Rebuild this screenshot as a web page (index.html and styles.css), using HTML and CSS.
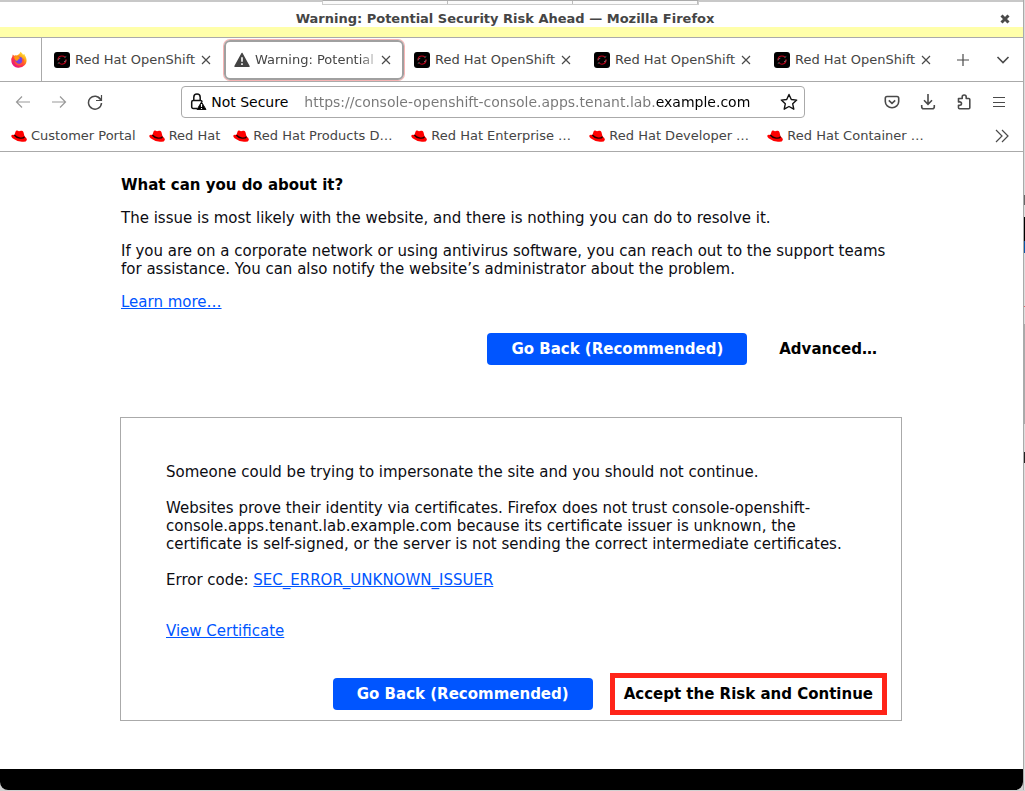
FILE: index.html
```html
<!DOCTYPE html>
<html lang="en">
<head>
<meta charset="utf-8">
<title>Warning: Potential Security Risk Ahead — Mozilla Firefox</title>
<link rel="stylesheet" href="styles.css">
</head>
<body>
<svg class="sprite" aria-hidden="true">
  <symbol id="hat" viewBox="0 0 16 14">
    <path fill="#f00" d="M3.400 6 4.600 2.600Q5 1.400 6.200 1.600L8 2.200 10 1.800Q11.800 1.600 12.400 3L13.600 7.400Q16.200 9 15.800 11 15 13.400 11 12.700 5 12 1.600 9.200-.2 7.400.4 6.400 1 5.400 3.400 6z"/>
    <path fill="none" stroke="#200" stroke-width="1.300" d="M3.300 6Q5 8.400 9 9.100 12.600 9.500 13.600 7.600"/>
  </symbol>
  <symbol id="openshift" viewBox="0 0 16 16">
    <rect width="16" height="16" rx="3"/>
    <path fill="none" stroke="#c0001a" stroke-width="1.100" d="M4 8.500Q3.800 4 8 4q1.800 0 2.800 1M12 7.300q.2 4.600-4 4.900-1.800 0-2.800-1.200"/>
    <path fill="none" stroke="#888" stroke-width=".8" d="m3.800 7.500 2.500-1.300M10 9.800l2.300-1.200M10.500 5.600l1.700-1M3.800 11.400l1.700-1"/>
  </symbol>
  <symbol id="close" viewBox="0 0 10 10"><path d="m1 1 8 8M9 1 1 9"/></symbol>
</svg>
<div class="desktop">
<div class="window">
  <header class="titlebar">
    <span class="title">Warning: Potential Security Risk Ahead — Mozilla Firefox</span>
    <button class="window-close" aria-label="Close window"><svg class="line heavy" width="10" height="10" viewBox="0 0 10 10"><path d="m1.500 1.500 7 7M8.500 1.500l-7 7"/></svg></button>
    <span class="shelf"><i></i><i></i><i></i></span>
  </header>
  <div class="highlight"></div>

  <nav class="tabs" aria-label="Tabs">
    <button class="view" aria-label="Firefox View">
      <svg width="18" height="18" viewBox="0 0 18 18">
        <defs><linearGradient id="flame" x1=".85" y1=".05" x2=".2" y2=".95"><stop offset="0" stop-color="#fff44f"/><stop offset=".35" stop-color="#ff980e"/><stop offset=".65" stop-color="#ff3647"/><stop offset="1" stop-color="#e31587"/></linearGradient></defs>
        <path fill="url(#flame)" d="M10.500.8q2 1.400 2.500 3l1.400-.9q.3 1.700 1.300 2.800 2.200 5-.8 8.300-2.800 3-6.900 2.700Q2.600 16 1.500 11.200.8 7 2.400 5.200l.3-1.700 1.500 1.200q1.500-.6 2.800-.1 2.800-1.200 3.500-3.800z"/>
        <circle cx="9" cy="9.600" r="3.900" fill="#7542e5"/>
        <path fill="#ff980e" d="M4 5.400q2.200-1 4.400.4l1.800 1.300-2 1.300-1.100 1.600Q4.600 9.500 4 5.400z"/>
        <path fill="none" stroke="#ff5634" stroke-width="1.600" d="M5 10.500q1.600 4 5.300 2.900 3.500-1.400 2.500-5.400"/>
      </svg>
    </button>
    <div class="tab"><svg class="favicon"><use href="#openshift"/></svg><span class="tab-label">Red Hat OpenShift</span><button class="tab-close" aria-label="Close tab"><svg class="line" width="10" height="10"><use href="#close"/></svg></button></div>
    <div class="tab active"><svg class="favicon" viewBox="0 0 16 16"><path fill="#444" stroke="#444" stroke-width="1.500" stroke-linejoin="round" d="M8 1.500 15 14.300H1z"/><path stroke="#fff" stroke-width="1.600" d="M8 5.200v4.600M8 11.200v1.700"/></svg><span class="tab-label fade">Warning: Potential</span><button class="tab-close" aria-label="Close tab"><svg class="line" width="10" height="10"><use href="#close"/></svg></button></div>
    <div class="tab"><svg class="favicon"><use href="#openshift"/></svg><span class="tab-label">Red Hat OpenShift</span><button class="tab-close" aria-label="Close tab"><svg class="line" width="10" height="10"><use href="#close"/></svg></button></div>
    <div class="tab"><svg class="favicon"><use href="#openshift"/></svg><span class="tab-label">Red Hat OpenShift</span><button class="tab-close" aria-label="Close tab"><svg class="line" width="10" height="10"><use href="#close"/></svg></button></div>
    <div class="tab"><svg class="favicon"><use href="#openshift"/></svg><span class="tab-label">Red Hat OpenShift</span><button class="tab-close" aria-label="Close tab"><svg class="line" width="10" height="10"><use href="#close"/></svg></button></div>
    <div class="tab-tools">
      <button aria-label="New tab"><svg class="line" width="16" height="16" viewBox="0 0 16 16"><path d="M8 2v12M2 8h12"/></svg></button>
      <button aria-label="List all tabs"><svg class="line thick" width="16" height="16" viewBox="0 0 16 16"><path d="m2.500 5 5.500 5.500L13.500 5"/></svg></button>
    </div>
  </nav>

  <div class="toolbar">
    <div class="history">
      <button aria-label="Back"><svg class="line muted" width="16" height="16" viewBox="0 0 16 16"><path d="M15 8H2M7 2.500 1.500 8 7 13.500"/></svg></button>
      <button aria-label="Forward"><svg class="line muted" width="16" height="16" viewBox="0 0 16 16"><path d="M1 8h13M9 2.500 14.500 8 9 13.500"/></svg></button>
      <button aria-label="Reload"><svg class="line" width="16" height="16" viewBox="0 0 16 16"><path stroke-width="1.500" d="M13.700 5.500A6.500 6.500 0 1 0 14.500 9"/><path d="M14.500 1v5.500H9M14.500 6.500 11 3"/></svg></button>
    </div>
    <div class="address">
      <svg width="17" height="18" viewBox="0 0 17 18"><g fill="none" stroke="#111" stroke-width="1.500"><path d="M3.800 7.500V4.200a3 3 0 0 1 6.400 0v3.300"/><path d="M7 15.500H3.200a1.500 1.500 0 0 1-1.500-1.500V9a1.500 1.500 0 0 1 1.500-1.500h7.300Q12 7.500 12 9"/></g><path stroke="#111" stroke-width="1" stroke-linejoin="round" d="M11.500 9 16 16.500H7z"/><path stroke="#fff" stroke-width="1.200" d="M11.500 11v3M11.500 15v1"/></svg>
      <label class="secure" for="url">Not Secure</label>
      <input id="url" class="url" type="text" value="https://console-openshift-console.apps.tenant.lab.example.com">
      <button aria-label="Bookmark this page"><svg class="line dark" width="18" height="18" viewBox="0 0 18 18"><path stroke-linejoin="round" d="m9 1.500 2.300 5 5.400.6-4 3.700 1.100 5.400L9 13.500l-4.800 2.700 1.100-5.400-4-3.700 5.400-.6z"/></svg></button>
    </div>
    <div class="actions">
      <button aria-label="Save to Pocket"><svg class="line thick" width="16" height="16" viewBox="0 0 16 16"><path d="M3 2.500h10a1.700 1.700 0 0 1 1.700 1.700V7.500a6.700 6.200 0 0 1-13.400 0V4.200A1.700 1.700 0 0 1 3 2.500zM4.800 6.300 8 9.300l3.200-3"/></svg></button>
      <button aria-label="Downloads"><svg class="line thick" width="16" height="16" viewBox="0 0 16 16"><path d="M8 0v10M4 6.300l4 4 4-4M1.700 11v1.700a2 2 0 0 0 2 2h8.600a2 2 0 0 0 2-2V11"/></svg></button>
      <button aria-label="Extensions"><svg class="line thick" width="16" height="16" viewBox="0 0 16 16"><path stroke-linejoin="round" d="M2.500 4.500h3.700V3a2 2 0 0 1 4 0v1.500h2.600q1 0 1 1v8.300q0 1-1 1H3.500q-1 0-1-1v-2.500h1.300a1.700 1.700 0 0 0 0-3.400H2.500z"/></svg></button>
      <button aria-label="Open menu"><svg class="line" width="14" height="16" viewBox="0 0 14 16"><path d="M1 3.500h12M1 8.500h12M1 12.500h12"/></svg></button>
    </div>
  </div>

  <nav class="bookmarks" aria-label="Bookmarks">
    <a href="#"><svg class="hat"><use href="#hat"/></svg>Customer Portal</a>
    <a href="#"><svg class="hat"><use href="#hat"/></svg>Red Hat</a>
    <a href="#" class="long"><svg class="hat"><use href="#hat"/></svg>Red Hat Products D…</a>
    <a href="#" class="long"><svg class="hat"><use href="#hat"/></svg>Red Hat Enterprise …</a>
    <a href="#" class="long"><svg class="hat"><use href="#hat"/></svg>Red Hat Developer …</a>
    <a href="#" class="long"><svg class="hat"><use href="#hat"/></svg>Red Hat Container …</a>
    <button class="more" aria-label="More bookmarks"><svg class="line" width="16" height="16" viewBox="0 0 16 16"><path d="m2 2 6 6-6 6M8 2l6 6-6 6"/></svg></button>
  </nav>

  <main class="page">
    <section class="advice">
      <h1>What can you do about it?</h1>
      <p>The issue is most likely with the website, and there is nothing you can do to resolve it.</p>
      <p>If you are on a corporate network or using antivirus software, you can reach out to the support teams for assistance. You can also notify the website’s administrator about the problem.</p>
      <p><a href="#">Learn more…</a></p>
      <div class="buttons">
        <button class="primary">Go Back (Recommended)</button>
        <button class="plain">Advanced…</button>
      </div>
    </section>
    <section class="details">
      <p>Someone could be trying to impersonate the site and you should not continue.</p>
      <p>Websites prove their identity via certificates. Firefox does not trust console-openshift-console.apps.tenant.lab.example.com because its certificate issuer is unknown, the certificate is self-signed, or the server is not sending the correct intermediate certificates.</p>
      <p>Error code: <a href="#">SEC_ERROR_UNKNOWN_ISSUER</a></p>
      <p class="certificate"><a href="#">View Certificate</a></p>
      <div class="buttons">
        <button class="primary">Go Back (Recommended)</button>
        <button class="accept">Accept the Risk and Continue</button>
      </div>
    </section>
  </main>
  <footer class="base"></footer>
</div>
<div class="behind"></div>
</div>
</body>
</html>
```
FILE: styles.css
```css
* { box-sizing: border-box; }
body { margin: 0; background: #d0d0d0; color: #0c0c12; font: 15px/18px "DejaVu Sans", sans-serif; }
button { border: 0; padding: 0; background: none; color: inherit; font: inherit; display: flex; align-items: center; justify-content: center; }
svg { flex: none; }
p, h1 { margin: 0; }
.sprite { position: absolute; width: 0; height: 0; }
.line { fill: none; stroke: #4a4a4a; stroke-width: 1.2; }
.thick { stroke-width: 1.6; }
.heavy { stroke-width: 3; }
.muted { stroke: #999; }
.dark { stroke: #111; stroke-width: 1.4; }

.desktop { display: flex; min-height: 100vh; padding-bottom: 1px; }
.window { flex: 1; min-width: 0; display: flex; flex-direction: column; background: #fff; border-radius: 0 0 8px 8px; overflow: hidden; }
.behind { width: 2px; border-left: 1px solid #aaa; background: linear-gradient(#ddd 195px, #666 195px 205px, #ddd 205px 217px, #000 217px 241px, #0b57a6 241px 253px, #ddd 253px 306px, #d66 306px 307px, #ddd 307px 324px, #aaa 324px 424px, #ddd 424px 452px, #222 452px 463px, #ddd 463px); }

.titlebar { position: relative; display: grid; grid-template-columns: 1fr auto 1fr; align-items: center; height: 27px; padding: 8px 13px 0 0; border-top: 2px solid #c8c8c8; color: #454545; font-size: 13px; font-weight: bold; line-height: 15px; }
.title { grid-column: 2; }
.window-close { justify-self: end; }
.shelf { position: absolute; top: -2px; left: 322px; display: flex; width: 377px; height: 5px; border: 1px solid #ccc; border-top-color: #aaa; background: #fafafa; }
.shelf i { flex: 1; border-right: 1px solid #bbb; }
.highlight { height: 11px; background: #ffffaa; border-bottom: 1px solid #aaa; }

.tabs { display: flex; align-items: center; height: 44px; border-bottom: 1px solid #aaa; color: #454545; font-size: 13px; }
.view { align-self: stretch; width: 42px; padding-right: 4px; margin-right: 2px; border-right: 1px solid #aaa; }
.tab { flex: 0 1 180px; min-width: 0; height: 40px; display: flex; align-items: center; padding: 0 13px 0 10px; }
.active { border: 2px solid #a0a0a0; border-radius: 6px; padding: 0 11px 0 8px; box-shadow: 0 0 0 1px #f6b4b4; }
.favicon { width: 16px; height: 16px; margin-right: 5px; }
.tab-label { flex: 1; min-width: 0; overflow: hidden; white-space: nowrap; }
.fade { mask-image: linear-gradient(to left, transparent, #000 20px); }
.tab-close { width: 11px; }
.tab-tools { flex: 1; display: flex; justify-content: flex-end; gap: 24px; padding-right: 12px; }

.toolbar { display: flex; align-items: center; height: 40px; padding: 0 17px 0 15px; }
.history { display: flex; gap: 20px; flex: 166 1 0; }
.address { flex: 607 1 0; display: flex; align-items: center; height: 32px; padding: 0 6px 0 8px; border: 1px solid #aaa; border-radius: 4px; color: #000; font-size: 14px; }
.secure { margin-left: 4px; white-space: nowrap; }
.url { flex: 1; min-width: 0; margin: 0 8px 0 16px; padding: 0; border: 0; outline: 0; font: inherit; color: transparent; background: linear-gradient(90deg, #777 351px, #000 351px); -webkit-background-clip: text; background-clip: text; }
.actions { flex: 201 1 0; display: flex; justify-content: flex-end; gap: 20px; }

.bookmarks { display: flex; align-items: center; gap: 13px; height: 30px; padding: 0 13px 2px 11px; border-bottom: 1px solid #aaa; font-size: 13px; }
.bookmarks a { display: flex; align-items: center; color: #454545; text-decoration: none; white-space: nowrap; }
.bookmarks .long { flex: 0 0 165px; }
.hat { width: 16px; height: 14px; margin-right: 4px; }
.more { margin-left: auto; }

.page { flex: 1; width: 100%; max-width: 783px; margin: 0 auto; padding: 24px 1px 48px 0; }
.page a { color: #0055ff; }
h1 { font-size: 15px; line-height: 18px; color: #000; }
.advice { padding: 0 1px; }
.advice p { margin-top: 15px; }
.buttons { display: flex; justify-content: flex-end; color: #000; font-weight: bold; }
.primary { height: 32px; padding: 0 24px; border-radius: 4px; background: #0055ff; color: #fff; }
.plain { height: 32px; padding: 0 24px; margin-left: 8px; }
.advice .buttons { margin-top: 22px; }
.details { margin-top: 52px; padding: 45px 14px 5px 45px; border: 1px solid #aaa; }
.details p { margin-bottom: 18px; max-width: 690px; }
.details .certificate { margin: 33px 0; }
.details .buttons { align-items: center; }
.accept { height: 42px; padding: 0 9px; margin-left: 17px; border: 5px solid #ff2419; }
.base { height: 21px; background: #000; }
```
